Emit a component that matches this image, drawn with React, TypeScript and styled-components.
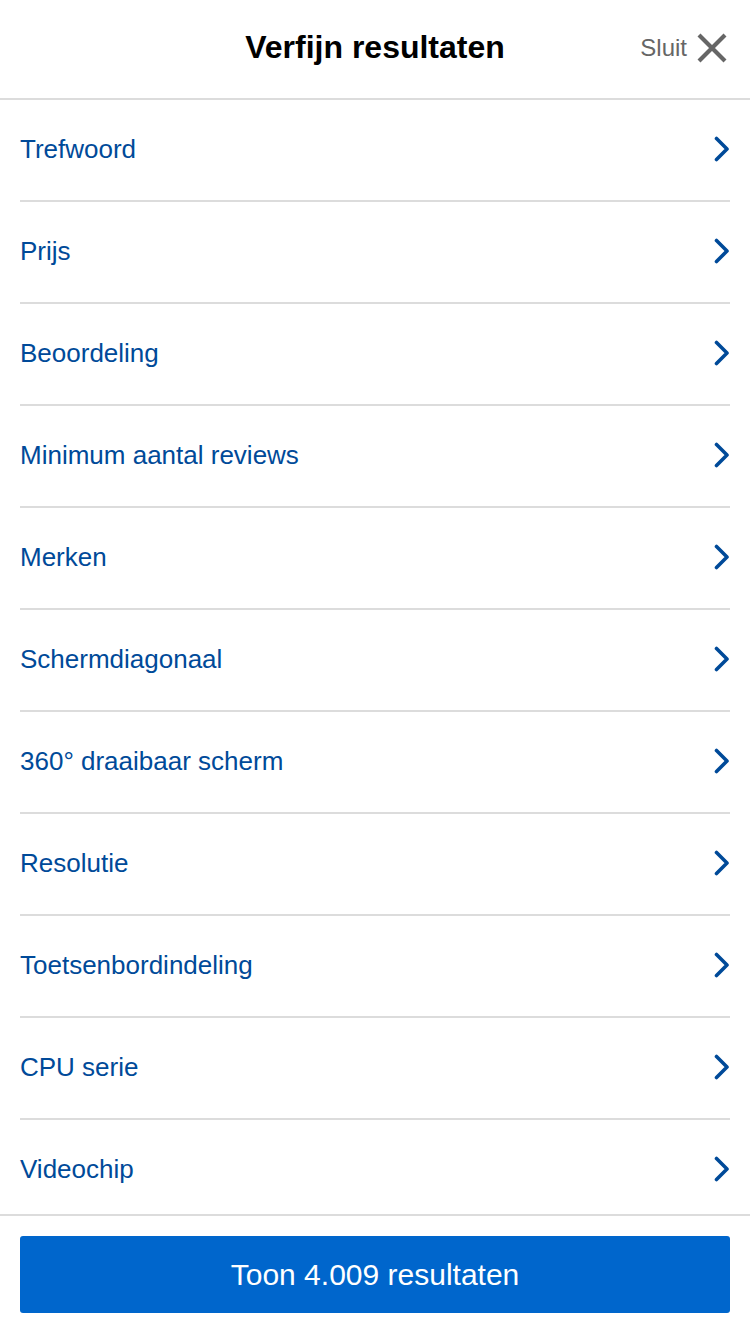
import React from "react";
import styled, { createGlobalStyle } from "styled-components";

const Global = createGlobalStyle`
  html, body { margin: 0; padding: 0; background: #fff; }
  body { font-family: "Liberation Sans", Arial, sans-serif; }
  * { box-sizing: border-box; }
`;

const Page = styled.div`
  width: 750px;
  height: 1334px;
  display: flex;
  flex-direction: column;
  background: #fff;
  overflow: hidden;
`;

const Header = styled.header`
  position: relative;
  height: 100px;
  flex: none;
  display: flex;
  align-items: center;
  justify-content: center;
  border-bottom: 2px solid #dcdcdc;
`;

const Title = styled.h1`
  margin: 0;
  font-size: 32px;
  font-weight: 700;
  color: #000;
  padding-bottom: 4px;
`;

const Close = styled.button`
  position: absolute;
  right: 23px;
  top: 33px;
  display: flex;
  align-items: center;
  gap: 10px;
  border: 0;
  background: none;
  padding: 0;
  font-family: inherit;
  font-size: 24px;
  color: #666;
  cursor: pointer;
`;

const List = styled.ul`
  list-style: none;
  margin: 0;
  padding: 0 20px;
  flex: 1;
  overflow: hidden;
`;

const Row = styled.li`
  height: 102px;
  display: flex;
  align-items: center;
  justify-content: space-between;
  border-bottom: 2px solid #dcdcdc;
  font-size: 26px;
  color: #004a99;
  padding-bottom: 2px;
`;

const Footer = styled.footer`
  flex: none;
  border-top: 2px solid #dcdcdc;
  padding: 20px 20px 21px;
`;

const Button = styled.button`
  width: 100%;
  height: 77px;
  border: 0;
  border-radius: 3px;
  background: #0066cc;
  color: #fff;
  font-family: inherit;
  font-size: 30px;
  padding: 0;
`;

const Chevron = () => (
  <svg width="16" height="26" viewBox="0 0 16 26">
    <path d="M2.5 2.5 L13 13 L2.5 23.5" fill="none" stroke="#004a99" strokeWidth="3.6" strokeLinecap="round" strokeLinejoin="round" />
  </svg>
);

const XIcon = () => (
  <svg width="30" height="30" viewBox="0 0 30 30">
    <path d="M2 2 L28 28 M28 2 L2 28" stroke="#666" strokeWidth="4.2" />
  </svg>
);

const items = [
  "Trefwoord",
  "Prijs",
  "Beoordeling",
  "Minimum aantal reviews",
  "Merken",
  "Schermdiagonaal",
  "360° draaibaar scherm",
  "Resolutie",
  "Toetsenbordindeling",
  "CPU serie",
  "Videochip",
];

export default function App() {
  return (
    <>
      <Global />
      <Page>
        <Header>
          <Title>Verfijn resultaten</Title>
          <Close>
            Sluit
            <XIcon />
          </Close>
        </Header>
        <List>
          {items.map((it) => (
            <Row key={it}>
              <span>{it}</span>
              <Chevron />
            </Row>
          ))}
        </List>
        <Footer>
          <Button>Toon 4.009 resultaten</Button>
        </Footer>
      </Page>
    </>
  );
}
